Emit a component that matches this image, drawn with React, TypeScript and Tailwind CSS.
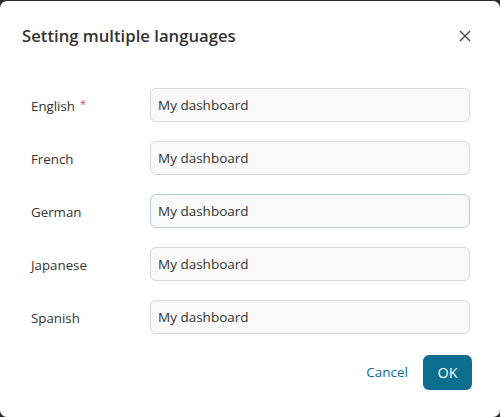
import React from 'react';

const languages = [
  { name: 'English', required: true },
  { name: 'French' },
  { name: 'German', focused: true },
  { name: 'Japanese' },
  { name: 'Spanish' },
];

export default function App() {
  return (
    <div className="w-[500px] h-[417px] bg-[#2b2b2b] pt-px" style={{ fontFamily: '"Open Sans", "Noto Sans", sans-serif' }}>
      <div className="h-[416px] bg-white rounded-[7px] flex flex-col">
        <div className="flex items-center justify-between pl-[22px] pr-[29px] pt-[23px]">
          <h1 className="text-[16.7px] leading-6 font-semibold text-[#333]">Setting multiple languages</h1>
          <button className="w-3 h-3 flex items-center justify-center text-[#444]">
            <svg width="12" height="12" viewBox="0 0 12 12" fill="none" stroke="currentColor" strokeWidth="1.4">
              <path d="M1 1L11 11M11 1L1 11" />
            </svg>
          </button>
        </div>

        <div className="flex flex-col gap-[19px] pt-[40px] pl-[31px] pr-[30px]">
          {languages.map((lang) => (
            <div key={lang.name} className="flex items-center">
              <div className="w-[119px] pt-[2px] text-[13.3px] leading-5 text-[#333] flex items-start">
                <span>{lang.name}</span>
                {lang.required && <span className="ml-[5px] mt-px text-[#e0457b] text-[11px] leading-[14px]">*</span>}
              </div>
              <input
                defaultValue="My dashboard"
                className={
                  'w-[320px] h-[34px] rounded-[6px] bg-[#f9f9f9] border px-[7px] text-[13.5px] text-[#333] outline-none ' +
                  (lang.focused ? 'border-[#bccbd6]' : 'border-[#d9d9d9]')
                }
              />
            </div>
          ))}
        </div>

        <div className="flex items-center justify-end gap-[15px] pr-[28px] pt-[21px]">
          <button className="text-[13.5px] text-[#0b6e8e]">Cancel</button>
          <button className="w-[49px] h-[35px] rounded-[6px] bg-[#0b6e8e] text-white text-[14.5px]">OK</button>
        </div>
      </div>
    </div>
  );
}
